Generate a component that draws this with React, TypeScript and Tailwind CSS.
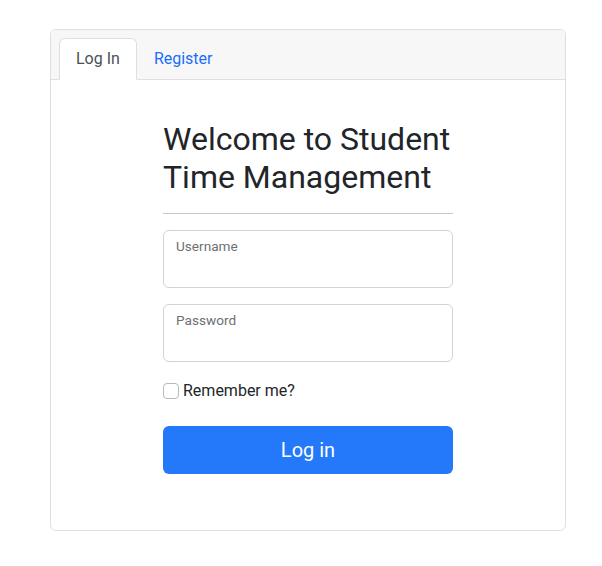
export default function App() {
  return (
    <div className="min-h-screen bg-white pt-[29px] px-[50px] font-['Roboto',sans-serif] text-[#212529]">
      <div className="w-[516px] rounded-md border border-[#dfdfdf] bg-white">
        {/* Card header with tabs */}
        <div className="flex rounded-t-md border-b border-[#dfdfdf] bg-[#f7f7f7] pl-2 pt-2">
          <div className="-mb-px rounded-t-md border border-[#dfdfdf] border-b-white bg-white px-4 py-2 text-base leading-6 text-[#495057]">
            Log In
          </div>
          <div className="-mb-px border border-transparent px-4 py-2 text-base leading-6 text-[#1a6ef8]">
            Register
          </div>
        </div>

        {/* Card body */}
        <div className="px-4 pt-[40px] pb-[56px]">
          <div className="mx-auto w-[290px]">
            <h1 className="text-[32px] font-normal leading-[38.4px] text-[#212529]">
              Welcome to Student Time Management
            </h1>
            <hr className="mt-4 mb-4 border-t border-[#c8c9ca]" />

            <div className="relative mb-4">
              <input
                className="h-[58px] w-full rounded-md border border-[#ced4da] bg-white px-3"
                aria-label="Username"
              />
              <label className="pointer-events-none absolute left-[13px] top-[6px] text-[13.6px] leading-5 text-[#6c7074]">
                Username
              </label>
            </div>

            <div className="relative mb-4">
              <input
                type="password"
                className="h-[58px] w-full rounded-md border border-[#ced4da] bg-white px-3"
                aria-label="Password"
              />
              <label className="pointer-events-none absolute left-[13px] top-[6px] text-[13.6px] leading-5 text-[#6c7074]">
                Password
              </label>
            </div>

            <label className="mt-[17px] flex items-center gap-1 text-base leading-6 text-[#212529]">
              <input
                type="checkbox"
                className="h-4 w-4 appearance-none rounded-[4px] border border-[#b9b9b9] bg-white"
              />
              Remember me?
            </label>

            <button className="mt-[23px] h-12 w-full rounded-md bg-[#2479fb] text-xl text-white">
              Log in
            </button>
          </div>
        </div>
      </div>
    </div>
  );
}
